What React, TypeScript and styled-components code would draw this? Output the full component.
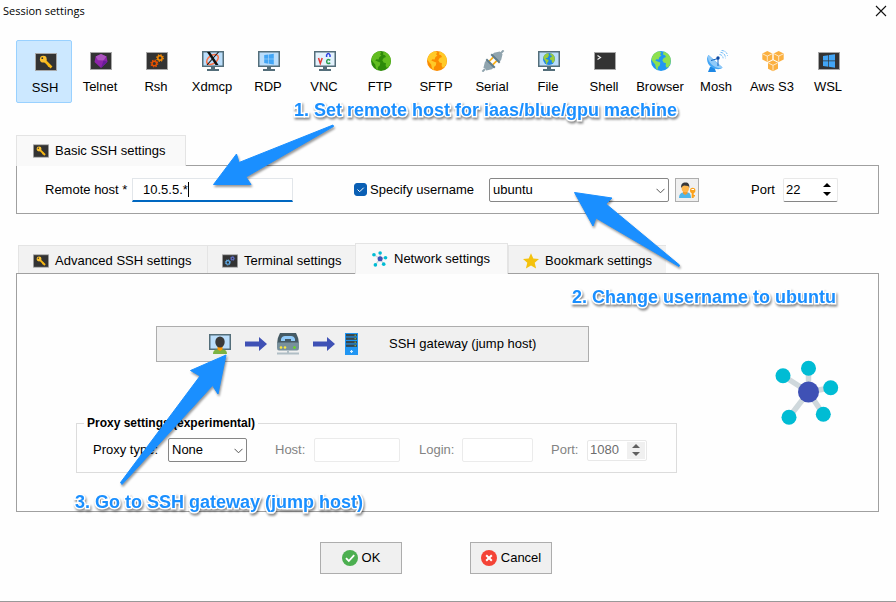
import React, { useState } from "react";
import styled, { createGlobalStyle } from "styled-components";

const GlobalStyle = createGlobalStyle`
  *, *::before, *::after { box-sizing: border-box; }
  body {
    margin: 0;
    background: #fefefe;
    color: #000;
    font: 13px/16px "Liberation Sans", Arial, sans-serif;
  }
  button, input, select { font: inherit; color: inherit; margin: 0; }
`;

/* ---------- window ---------- */

const Window = styled.div`
  position: relative;
  display: flex;
  flex-direction: column;
  min-height: 100vh;
  border-bottom: 1px solid #999;
`;

const TitleBar = styled.header`
  display: flex;
  justify-content: space-between;
  align-items: center;
  height: 22px;
  padding: 0 9px 0 3px;
`;

const Title = styled.h1`
  margin: 0;
  font: 400 11px/16px "Open Sans", sans-serif;
`;

const CloseButton = styled.button`
  display: flex;
  padding: 0;
  border: 0;
  background: none;
`;

const Toolbar = styled.nav`
  display: flex;
  margin-top: 18px;
  padding: 0 16px;
`;

const ToolButton = styled.button<{ $selected: boolean }>`
  display: flex;
  flex-direction: column;
  align-items: center;
  gap: 7px;
  flex: 0 0 56px;
  height: 63px;
  padding: ${(p) => (p.$selected ? "10px 0 0 2px" : "9px 0 0")};
  border: 1px solid ${(p) => (p.$selected ? "#99d1ff" : "transparent")};
  border-radius: 2px;
  background: ${(p) => (p.$selected ? "#cce8ff" : "none")};
  white-space: nowrap;
`;

const Section = styled.section<{ $gap: number }>`
  margin: ${(p) => p.$gap}px 17px 0 16px;
`;

const TabList = styled.div<{ $inset: number }>`
  display: flex;
  align-items: flex-end;
  padding-left: ${(p) => p.$inset}px;
`;

const Tab = styled.button<{ $active: boolean; $width: number }>`
  display: flex;
  align-items: center;
  gap: 6px;
  width: ${(p) => p.$width}px;
  height: ${(p) => (p.$active ? 31 : 28)}px;
  margin-bottom: ${(p) => (p.$active ? -1 : 0)}px;
  padding: ${(p) => (p.$active ? "0 0 0 16px" : "2px 0 0 14px")};
  position: relative;
  border: 1px solid #e4e4e4;
  border-bottom: 0;
  border-right-width: ${(p) => (p.$active ? 1 : 0)}px;
  background: ${(p) => (p.$active ? "#f9f9f9" : "#f2f2f2")};
  white-space: nowrap;
`;

const BasicPanel = styled.div`
  display: flex;
  align-items: center;
  height: 49px;
  padding: 0 28px;
  border: 1px solid #a0a0a0;
`;

const NetworkPanel = styled.div`
  display: flex;
  justify-content: space-between;
  padding: 52px 37px 38px 59px;
  border: 1px solid #a0a0a0;
`;

const NetworkMain = styled.div`
  flex: 0 1 601px;
`;

const NetworkArt = styled.div`
  margin-top: 34px;
`;

/* ---------- form parts ---------- */

const Label = styled.label<{ $width?: number; $muted?: boolean }>`
  flex: none;
  ${(p) => p.$width && `width: ${p.$width}px;`}
  color: ${(p) => (p.$muted ? "#838383" : "#000")};
  white-space: nowrap;
`;

const FieldBox = styled.div<{ $width: number; $after: number }>`
  position: relative;
  flex: none;
  display: flex;
  width: ${(p) => p.$width}px;
  margin-right: ${(p) => p.$after}px;
`;

const HostInput = styled.input`
  width: 100%;
  height: 24px;
  padding: 0 10px;
  border: 1px solid #e2e6ea;
  border-bottom: 2px solid #0067c0;
  background: #fff;
  outline: none;
`;

const Caret = styled.span`
  position: absolute;
  left: 56px;
  top: 4px;
  width: 1px;
  height: 15px;
  background: #000;
`;

const Check = styled.input`
  appearance: none;
  flex: none;
  width: 13px;
  height: 13px;
  border-radius: 3px;
  background: #fff;
  border: 1px solid #0a5fb4;
  &:checked { background: #0a5fb4; }
`;

const CheckBox = styled.span`
  position: relative;
  display: flex;
  margin-right: 3px;
  svg { position: absolute; inset: 0; pointer-events: none; }
`;

const Select = styled.select`
  appearance: none;
  width: 100%;
  height: 24px;
  padding: 0 20px 0 3px;
  border: 1px solid #868686;
  border-radius: 2px;
  background: #fff;
`;

const SelectMark = styled.span`
  position: absolute;
  right: 4px;
  top: 10px;
  display: flex;
  pointer-events: none;
`;

const TextInput = styled.input`
  width: 100%;
  height: 24px;
  padding: 0 4px;
  border: 1px solid #ebebeb;
  border-radius: 2px;
  background: #fff;
`;

const SpinBox = styled.div<{ $disabled?: boolean }>`
  display: flex;
  width: 100%;
  height: ${(p) => (p.$disabled ? 21 : 24)}px;
  border: 1px solid #e8e8e8;
  border-bottom-color: ${(p) => (p.$disabled ? "#e8e8e8" : "#868686")};
  border-radius: 2px;
  background: #fff;
  color: ${(p) => (p.$disabled ? "#6d6d6d" : "#000")};
`;

const SpinInput = styled.input`
  flex: 1;
  min-width: 0;
  padding: 0 0 0 2px;
  border: 0;
  background: none;
  appearance: textfield;
  &::-webkit-inner-spin-button { appearance: none; }
`;

const SpinButtons = styled.div<{ $disabled?: boolean }>`
  display: flex;
  flex-direction: column;
  justify-content: center;
  gap: ${(p) => (p.$disabled ? 4 : 5)}px;
  width: 18px;
  margin: 1px;
  background: ${(p) => (p.$disabled ? "#f0f0f0" : "none")};
`;

const SpinButton = styled.button`
  display: flex;
  justify-content: center;
  padding: 0;
  border: 0;
  background: none;
`;

const PushButton = styled.button`
  display: flex;
  align-items: center;
  border: 1px solid #adadad;
  background: #f0f0f0;
`;

const UserButton = styled(PushButton)`
  justify-content: center;
  flex: none;
  width: 24px;
  height: 24px;
  padding: 0;
  margin: 0 52px 0 6px;
`;

const GatewayButton = styled(PushButton)`
  width: 433px;
  max-width: 100%;
  height: 36px;
  margin-left: 80px;
  padding: 0 0 0 52px;
`;

const GatewayIcons = styled.span`
  display: flex;
  align-items: center;
  gap: 10px;
  width: 180px;
`;

const ProxyGroup = styled.fieldset`
  min-width: 0;
  margin: 54px 0 0;
  padding: 8px 7px 10px;
  border: 1px solid #dcdcdc;
`;

const ProxyLegend = styled.legend`
  padding: 0 3px;
  font-weight: 700;
  font-size: 12px;
  line-height: 14px;
`;

const ProxyRow = styled.div`
  display: flex;
  align-items: center;
  padding-left: 9px;
`;

const Actions = styled.footer`
  display: flex;
  justify-content: center;
  gap: 68px;
  padding: 30px 24px 27px 0;
`;

const ActionButton = styled(PushButton)`
  justify-content: center;
  gap: 4px;
  width: 82px;
  height: 32px;
  padding: 0;
`;

/* ---------- tutorial notes over the dialog ---------- */

const Note = styled.p<{ $x: number; $y: number }>`
  position: absolute;
  left: ${(p) => p.$x}px;
  top: ${(p) => p.$y}px;
  margin: 0;
  color: #1a8fff;
  font-size: 18px;
  font-weight: 700;
  line-height: 20px;
  white-space: nowrap;
  pointer-events: none;
  -webkit-text-stroke: 3px #fff;
  paint-order: stroke fill;
  filter: drop-shadow(1px 2px 1px rgba(0, 0, 0, 0.45));
`;

const Arrows = styled.svg`
  position: absolute;
  inset: 0;
  width: 100%;
  height: 100%;
  pointer-events: none;
  filter: drop-shadow(1px 2px 1px rgba(0, 0, 0, 0.4));
`;

/* ---------- icons ---------- */

const Tile = () => <rect x="0.5" y="2.5" width="21" height="17" fill="#333" stroke="#a8a8a8" />;

const Monitor = ({ fill = "#bbdefb" }: { fill?: string }) => (
  <g>
    <path d="M9 17h4v2h4v2H5v-2h4z" fill="#546e7a" />
    <rect x="0" y="1" width="22" height="16" fill="#546e7a" />
    <rect x="1.5" y="2.5" width="19" height="13" fill={fill} />
  </g>
);

const KeyShape = () => (
  <g>
    <path d="M9.5 9.5l7 7" stroke="#f9b914" strokeWidth="2.6" />
    <path d="M13 15.4l1.8-1.8" stroke="#f9b914" strokeWidth="1.6" />
    <circle cx="8.3" cy="8.2" r="3.4" fill="#fbc02d" />
    <circle cx="7.3" cy="7.2" r="0.9" fill="#333" />
  </g>
);

const WinLogo = () => (
  <path
    d="M5 6l5.300-.8v5.400H5zM11 5.100l6-.9v6.400h-6zM5 11.300h5.300v5.400L5 15.900zM11 11.300h6v6.400l-6-.9z"
    fill="#42a5f5"
  />
);

const Gear = ({ x, y, r, color }: { x: number; y: number; r: number; color: string }) => (
  <g stroke={color} fill="none">
    <circle cx={x} cy={y} r={r} strokeWidth="1.5" />
    <circle cx={x} cy={y} r={r + 1.1} strokeWidth="1.2" strokeDasharray={`${(r + 1.1) * 0.4} ${(r + 1.1) * 0.3854}`} />
  </g>
);

const Globe = ({ sea, land }: { sea: string; land: string }) => (
  <g>
    <circle cx="11" cy="11" r="10" fill={sea} />
    <path
      d="M2.500 6C4 3.200 6.500 1.700 9.500 1.300L11.300 2.600 10 4.300 11.400 5.600 9.300 7.200 8.600 9.500 6.400 9.300 5.300 10.600 7.600 11.400 10.300 12.600 9.900 15.300 8 17.100 7.600 20.200C5.800 19 5.600 16.700 5.200 14.600L3 12 1.300 9.500ZM13.500 1.500C17 2.300 19.800 5 20.700 8.500L20.600 13.500 18.500 17 16.600 17.800 15.600 15.600 16 13.300 13.600 12.500 12.300 10.300 13.700 7.900 16 7 15 5.300 13 4.600Z"
      fill={land}
    />
  </g>
);

const HexBox = ({ x, y }: { x: number; y: number }) => (
  <g transform={`translate(${x} ${y})`}>
    <path d="M0-5.400L5-3V3L0 5.500-5 3V-3Z" fill="#fbb040" />
    <path d="M-4.600-2.600L0-.4 4.600-2.600M0-.4V5" stroke="#fff" strokeWidth="0.7" fill="none" />
  </g>
);

const toolGlyphs: Record<string, React.ReactNode> = {
  SSH: <><Tile /><KeyShape /></>,
  Telnet: (
    <>
      <Tile />
      <path d="M11 4l5.500 2.500 1 5.200L11 18l-6.500-6 1.200-5.500z" fill="#8e24aa" />
      <path d="M11 4l5.500 2.500-3 4-5.600-.2-2.200-3.800z" fill="#ab55be" />
      <path d="M13.500 10.500l4 1.200L11 18z" fill="#6a1b9a" />
    </>
  ),
  Rsh: <><Tile /><Gear x={8.300} y={13.500} r={2.300} color="#e65100" /><Gear x={14} y={8} r={2.200} color="#fb8c00" /></>,
  Xdmcp: (
    <>
      <Monitor />
      <ellipse cx="10.500" cy="9.500" rx="6.500" ry="4" fill="none" stroke="#ff7043" strokeWidth="1.500" transform="rotate(-35 10.500 9.500)" />
      <path d="M5 2h3l8.500 13h-3z" fill="#111" />
      <path d="M16.500 2L5 15" stroke="#111" strokeWidth="1.100" />
    </>
  ),
  RDP: <><Monitor /><g transform="translate(2.200 .3) scale(.8)"><WinLogo /></g></>,
  VNC: (
    <>
      <Monitor fill="#e3f2fd" />
      <g fill="none" strokeWidth="1.500">
        <path d="M4.500 8l1.800 5.500L8.200 8" stroke="#e53935" />
        <path d="M12.600 7V5.200Q14.300 2 16 5.200V7" stroke="#3040e0" />
        <path d="M16.300 10.200Q12.700 8.500 12.700 11.500T16.300 13" stroke="#2e9e4f" />
      </g>
    </>
  ),
  FTP: <Globe sea="#2e8b0a" land="#62bd20" />,
  SFTP: <Globe sea="#fb8c00" land="#ffca28" />,
  Serial: (
    <g transform="rotate(45 11 11)">
      <path d="M8.500 8v6M13.500 8v6" stroke="#fbb017" strokeWidth="1.800" />
      <path d="M6 8V4.500L9-.5h4L16 4.500V8ZM10-4h2v4h-2z" fill="#90a4ae" />
      <path d="M6 14v3.500l3 5h4l3-5V14ZM10 22h2v4h-2z" fill="#90a4ae" />
      <path d="M5 6.500h12v2H5zM5 13.500h12v2H5z" fill="#607d8b" />
    </g>
  ),
  File: <><Monitor /><g transform="translate(4.400 2.400) scale(.6)"><Globe sea="#1e88e5" land="#9ccc3c" /></g></>,
  Shell: <><Tile /><path d="M3.500 5.500l3 2-3 2" fill="none" stroke="#eee" strokeWidth="1.200" /></>,
  Browser: <Globe sea="#2196f3" land="#8de04f" />,
  Mosh: (
    <>
      <path d="M4 17l4-1 2 6H2z" fill="#1e88e5" />
      <path d="M2.500 5C-.5 9 1.500 15 6 17.500s9 2 10.500 0z" fill="#42a5f5" />
      <path d="M2.500 5C.8 8.500 3.500 13 7 15.500s7.800 3.500 9.500 2z" fill="#90caf9" />
      <path d="M12 8.500L5 10.500M12 8.500V16" stroke="#1565c0" strokeWidth="1" />
      <circle cx="12" cy="8" r="1.700" fill="#0d47a1" />
      <path d="M13.500 4.500q3.300.3 3.600 3.800M14.500 2.300q4.700.5 5 6M15.500 .4q5.700.7 6 5.500" fill="none" stroke="#64b5f6" strokeWidth="0.900" strokeDasharray="3 1" />
    </>
  ),
  "Aws S3": <><HexBox x={5.300} y={6.500} /><HexBox x={16.700} y={6.500} /><HexBox x={11} y={15.700} /></>,
  WSL: <><Tile /><WinLogo /></>,
};

const ToolIcon = ({ name }: { name: string }) => (
  <svg width="26" height="22" viewBox="-3 0 26 22" aria-hidden="true">
    {toolGlyphs[name]}
  </svg>
);

const SmallKey = () => (
  <svg width="16" height="16" viewBox="0 0 22 22" aria-hidden="true"><Tile /><KeyShape /></svg>
);

const SmallGears = () => (
  <svg width="16" height="16" viewBox="0 0 22 22" aria-hidden="true">
    <Tile />
    <Gear x={8} y={13} r={2.500} color="#64b5f6" />
    <Gear x={14.500} y={7.500} r={1.800} color="#5c6bc0" />
  </svg>
);

const nodes = [[32.500, 8.300], [7, 15.700], [54.700, 27.700], [47.300, 54.300], [13, 57.300]];

const NetworkIcon = ({ size }: { size: number }) => (
  <svg width={size} height={size} viewBox="-1 0 66 66" aria-hidden="true">
    {nodes.map(([x, y]) => (
      <path key={x} d={`M32.500 32L${x} ${y}`} stroke="#cfd8dc" strokeWidth="5.500" />
    ))}
    {nodes.map(([x, y]) => (
      <circle key={x} cx={x} cy={y} r="7.500" fill="#00bcd4" />
    ))}
    <circle cx="32.500" cy="32" r="10.500" fill="#3f51b5" />
  </svg>
);

const StarIcon = () => (
  <svg width="16" height="16" viewBox="0 0 16 16" aria-hidden="true">
    <path d="M8 .3l2.300 5.200 5.700.5-4.300 3.800 1.400 5.700L8 12.500l-5.100 3 1.400-5.700L0 6l5.700-.5z" fill="#f4c20d" />
  </svg>
);

const Chevron = () => (
  <svg width="9" height="6" viewBox="0 0 9 6" aria-hidden="true">
    <path d="M.5.8l4 4 4-4" fill="none" stroke="#555" />
  </svg>
);

const Triangle = ({ down = false, color = "#000" }: { down?: boolean; color?: string }) => (
  <svg width="8" height="4" viewBox="0 0 8 4" aria-hidden="true">
    <path d={down ? "M0 0h8L4 4z" : "M4 0l4 4H0z"} fill={color} />
  </svg>
);

const UserKeyIcon = () => (
  <svg width="18" height="18" viewBox="0 0 18 18" aria-hidden="true">
    <path d="M1 17q0-5 4-5.500h5q3 .5 3 5.500z" fill="#4fb6ea" />
    <path d="M5 10h4.500v2.500L7.200 14 5 12.500z" fill="#f09a2c" />
    <ellipse cx="7.300" cy="7" rx="3.700" ry="4.300" fill="#ffb74d" />
    <path d="M3.200 7C2.800 3 4.500 1.500 7.500 1.500S11.700 3.500 11.300 7L10.300 5 6 4.500 4.300 5.500z" fill="#37383c" />
    <circle cx="14.700" cy="9.500" r="2.700" fill="#fba21c" />
    <path d="M13.700 11h2v6h-2zM15 14h2v1.500h-2z" fill="#fba21c" />
    <path d="M13.500 8.500h2.500" stroke="#fff" />
  </svg>
);

const OperatorIcon = () => (
  <svg width="22" height="22" viewBox="0 0 22 22" aria-hidden="true">
    <rect x="0" y="1" width="22" height="16" fill="#546e7a" />
    <rect x="1.500" y="2.500" width="19" height="13" fill="#bbdefb" />
    <path d="M4 21q0-4.500 4-4.500h6q4 0 4 4.500z" fill="#7cb342" />
    <path d="M8.500 13h5v3.500L11 18l-2.500-1.500z" fill="#ff9800" />
    <ellipse cx="11" cy="9" rx="4.700" ry="5.500" fill="#3a3a3a" />
  </svg>
);

const ArrowIcon = () => (
  <svg width="26" height="14" viewBox="-4 0 26 14" aria-hidden="true">
    <path d="M0 4.500h14V0l8 7-8 7V9.500H0z" fill="#3f51b5" />
  </svg>
);

const ModemIcon = () => (
  <svg width="22" height="22" viewBox="0 0 22 22" aria-hidden="true">
    <path d="M3 0h16q3 5 3 11H0Q0 5 3 0z" fill="#455a64" />
    <path d="M4 8V6q1-3 4-3h6q3 0 4 3v2h-4V6H8v2z" fill="#90caf9" />
    <path d="M0 9.500h22V15q0 2.500-2 2.500H2Q0 17.500 0 15z" fill="#78909c" />
    <path d="M10 17.500h2v2h-2zM0 19.500h22v2H0z" fill="#b0bec5" />
    <circle cx="4" cy="14.500" r="1.300" fill="#ffeb3b" />
    <circle cx="8" cy="14.500" r="1.300" fill="#ffeb3b" />
    <circle cx="17.500" cy="14.500" r="1.300" fill="#64dd17" />
  </svg>
);

const ServerIcon = () => (
  <svg width="13" height="22" viewBox="0 0 13 22" aria-hidden="true">
    <rect width="13" height="22" fill="#2196f3" />
    {[1, 4.500, 8, 11.500].map((y) => (
      <g key={y}>
        <rect x="1" y={y} width="11" height="2.400" fill="#37474f" />
        <rect x="9.500" y={y + 0.700} width="1.500" height="1" fill="#8bc34a" />
      </g>
    ))}
    <path d="M6.500 17v3M5 18.500h3" stroke="#d6efff" strokeWidth="1.200" />
  </svg>
);

const OkIcon = () => (
  <svg width="16" height="16" viewBox="0 0 16 16" aria-hidden="true">
    <circle cx="8" cy="8" r="8" fill="#4caf50" />
    <path d="M4 8.200l2.800 2.800 5.400-5.800" fill="none" stroke="#fff" strokeWidth="1.800" />
  </svg>
);

const CancelIcon = () => (
  <svg width="16" height="16" viewBox="0 0 16 16" aria-hidden="true">
    <circle cx="8" cy="8" r="8" fill="#f44336" />
    <path d="M5.200 5.200l5.600 5.600M10.800 5.200l-5.600 5.600" stroke="#fff" strokeWidth="2" />
  </svg>
);

/* ---------- page ---------- */

type SpinProps = { id: string; initial: number; disabled?: boolean };

function Spin({ id, initial, disabled }: SpinProps) {
  const [value, setValue] = useState(initial);
  const color = disabled ? "#606060" : "#000";
  return (
    <SpinBox $disabled={disabled}>
      <SpinInput id={id} type="number" value={value} disabled={disabled} onChange={(e) => setValue(Number(e.target.value))} />
      <SpinButtons $disabled={disabled}>
        <SpinButton type="button" aria-label="Increase" disabled={disabled} onClick={() => setValue(value + 1)}>
          <Triangle color={color} />
        </SpinButton>
        <SpinButton type="button" aria-label="Decrease" disabled={disabled} onClick={() => setValue(value - 1)}>
          <Triangle down color={color} />
        </SpinButton>
      </SpinButtons>
    </SpinBox>
  );
}

const tabs = [
  { name: "Advanced SSH settings", width: 189, icon: <SmallKey /> },
  { name: "Terminal settings", width: 148, icon: <SmallGears /> },
  { name: "Network settings", width: 153, icon: <NetworkIcon size={16} /> },
  { name: "Bookmark settings", width: 158, icon: <StarIcon /> },
];

export default function App() {
  const [tool, setTool] = useState("SSH");
  const [tab, setTab] = useState("Network settings");
  const [named, setNamed] = useState(true);

  return (
    <>
      <GlobalStyle />
      <Window>
        <TitleBar>
          <Title>Session settings</Title>
          <CloseButton type="button" aria-label="Close">
            <svg width="12" height="12" viewBox="0 0 12 12" aria-hidden="true">
              <path d="M1 1l10 10M11 1L1 11" stroke="#111" strokeWidth="1.100" />
            </svg>
          </CloseButton>
        </TitleBar>

        <Toolbar aria-label="Session type">
          {Object.keys(toolGlyphs).map((name) => (
            <ToolButton key={name} type="button" $selected={name === tool} onClick={() => setTool(name)}>
              <ToolIcon name={name} />
              {name}
            </ToolButton>
          ))}
        </Toolbar>

        <Section $gap={32}>
          <TabList role="tablist" $inset={0}>
            <Tab type="button" role="tab" aria-selected="true" $active $width={170}>
              <SmallKey />Basic SSH settings
            </Tab>
          </TabList>
          <BasicPanel>
            <Label htmlFor="host" $width={87}>Remote host *</Label>
            <FieldBox $width={161} $after={61}>
              <HostInput id="host" defaultValue="10.5.5.*" />
              <Caret />
            </FieldBox>
            <CheckBox>
              <Check id="named" type="checkbox" checked={named} onChange={(e) => setNamed(e.target.checked)} />
              <svg width="13" height="13" viewBox="0 0 13 13" aria-hidden="true">
                <path d="M3.500 6.500l2.200 2.200 4-4" fill="none" stroke="#fff" />
              </svg>
            </CheckBox>
            <Label htmlFor="named" $width={119}>Specify username</Label>
            <FieldBox $width={180} $after={0}>
              <Select aria-label="Username" defaultValue="ubuntu">
                <option>ubuntu</option>
              </Select>
              <SelectMark><Chevron /></SelectMark>
            </FieldBox>
            <UserButton type="button" aria-label="Manage credentials"><UserKeyIcon /></UserButton>
            <Label htmlFor="port" $width={32}>Port</Label>
            <FieldBox $width={55} $after={0}><Spin id="port" initial={22} /></FieldBox>
          </BasicPanel>
        </Section>

        <Section $gap={29}>
          <TabList role="tablist" $inset={2}>
            {tabs.map((t) => (
              <Tab
                key={t.name}
                type="button"
                role="tab"
                aria-selected={t.name === tab}
                $active={t.name === tab}
                $width={t.width}
                onClick={() => setTab(t.name)}
              >
                {t.icon}
                {t.name}
              </Tab>
            ))}
          </TabList>
          <NetworkPanel>
            <NetworkMain>
              <GatewayButton type="button">
                <GatewayIcons>
                  <OperatorIcon /><ArrowIcon /><ModemIcon /><ArrowIcon /><ServerIcon />
                </GatewayIcons>
                SSH gateway (jump host)
              </GatewayButton>
              <ProxyGroup>
                <ProxyLegend>Proxy settings (experimental)</ProxyLegend>
                <ProxyRow>
                  <Label htmlFor="proxy" $width={75}>Proxy type:</Label>
                  <FieldBox $width={79} $after={28}>
                    <Select id="proxy" defaultValue="None"><option>None</option></Select>
                    <SelectMark><Chevron /></SelectMark>
                  </FieldBox>
                  <Label htmlFor="proxyHost" $width={39} $muted>Host:</Label>
                  <FieldBox $width={86} $after={19}><TextInput id="proxyHost" disabled /></FieldBox>
                  <Label htmlFor="login" $width={43} $muted>Login:</Label>
                  <FieldBox $width={71} $after={18}><TextInput id="login" disabled /></FieldBox>
                  <Label htmlFor="proxyPort" $width={36} $muted>Port:</Label>
                  <FieldBox $width={60} $after={0}><Spin id="proxyPort" initial={1080} disabled /></FieldBox>
                </ProxyRow>
              </ProxyGroup>
            </NetworkMain>
            <NetworkArt><NetworkIcon size={66} /></NetworkArt>
          </NetworkPanel>
        </Section>

        <Actions>
          <ActionButton type="button"><OkIcon />OK</ActionButton>
          <ActionButton type="button"><CancelIcon />Cancel</ActionButton>
        </Actions>

        <Arrows aria-hidden="true">
          <g fill="#1a8fff" stroke="#1a8fff" strokeLinejoin="round">
            <path d="M213.500 184.500L236.500 154 239 162.500 333 125 333.500 126.500 246 177 251 184.500Z" />
            <path d="M574.500 192.500L612 198 606 204 679.500 265 679 266.500 596 218 593 226Z" />
            <path d="M226 355L190.500 370.500 200 376 120.500 482.500 122 484.500 212.500 385.500 218 394Z" />
          </g>
        </Arrows>
        <Note $x={294} $y={100}>1. Set remote host for iaas/blue/gpu machine</Note>
        <Note $x={572} $y={287}>2. Change username to ubuntu</Note>
        <Note $x={75} $y={492}>3. Go to SSH gateway (jump host)</Note>
      </Window>
    </>
  );
}
